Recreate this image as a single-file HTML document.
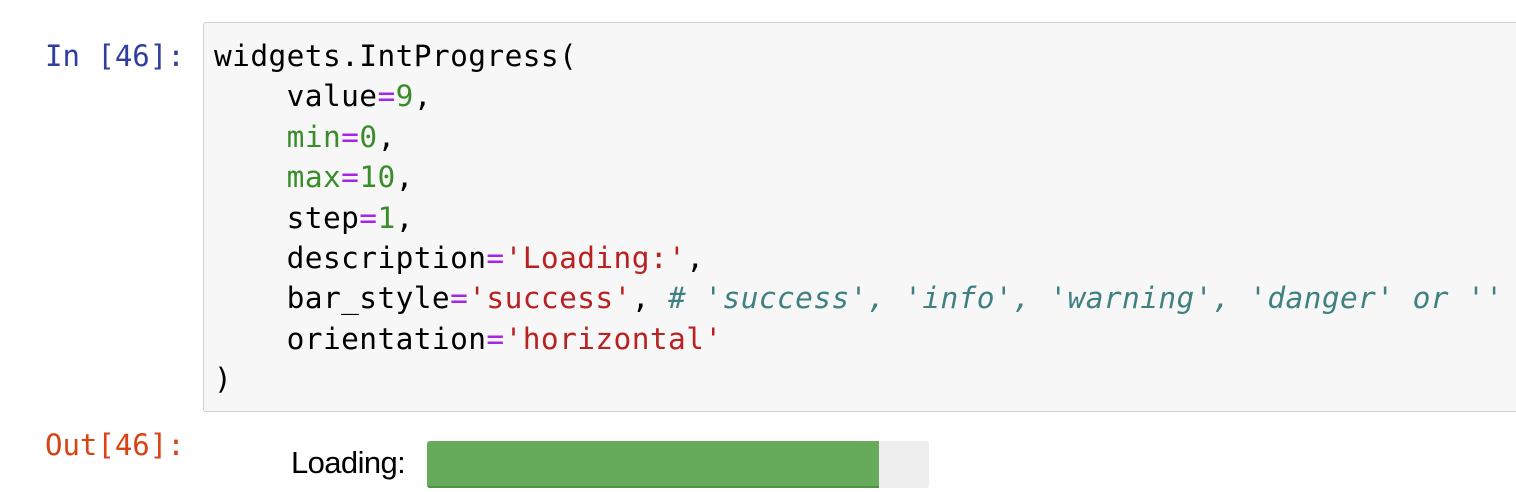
<!DOCTYPE html>
<html><head><style>
body{margin:0;width:1516px;height:492px;background:#fff;overflow:hidden;position:relative;font-family:"DejaVu Sans Mono","Liberation Mono",monospace;}
.p{position:absolute;font-size:29px;line-height:40px;white-space:pre;}
.box{position:absolute;left:203px;top:22px;width:1330px;height:388px;background:#f7f7f7;border:1px solid #cfcfcf;border-radius:3px;}
.code{position:absolute;left:214px;top:36px;font-size:29.5px;line-height:40.4px;white-space:pre;color:#000;letter-spacing:0.4px;}
.k{color:#a626e8}.n{color:#3b8c2a}.s{color:#ba2121}.c{color:#408080;font-style:italic}.v{color:#3b8c2a}
</style></head><body>
<div class="p" style="left:45px;top:36px;color:#303f9f">In [46]:</div>
<div class="box"></div>
<div class="code">widgets.IntProgress(
    value<span class="k">=</span><span class="n">9</span>,
    <span class="v">min</span><span class="k">=</span><span class="n">0</span>,
    <span class="v">max</span><span class="k">=</span><span class="n">10</span>,
    step<span class="k">=</span><span class="n">1</span>,
    description<span class="k">=</span><span class="s">'Loading:'</span>,
    bar_style<span class="k">=</span><span class="s">'success'</span>, <span class="c"># 'success', 'info', 'warning', 'danger' or ''</span>
    orientation<span class="k">=</span><span class="s">'horizontal'</span>
)</div>
<div class="p" style="left:45px;top:425px;color:#d84315">Out[46]:</div>
<div style="position:absolute;left:291px;top:445px;font-family:'Liberation Sans',sans-serif;font-size:31px;color:#000;letter-spacing:-0.6px">Loading:</div>
<div style="position:absolute;left:427px;top:441px;width:502px;height:47px;background:#eee;border-radius:3px;overflow:hidden">
<div style="width:452px;height:45px;background:#66ab5a;border-bottom:2px solid #4e9244"></div></div>
</body></html>
